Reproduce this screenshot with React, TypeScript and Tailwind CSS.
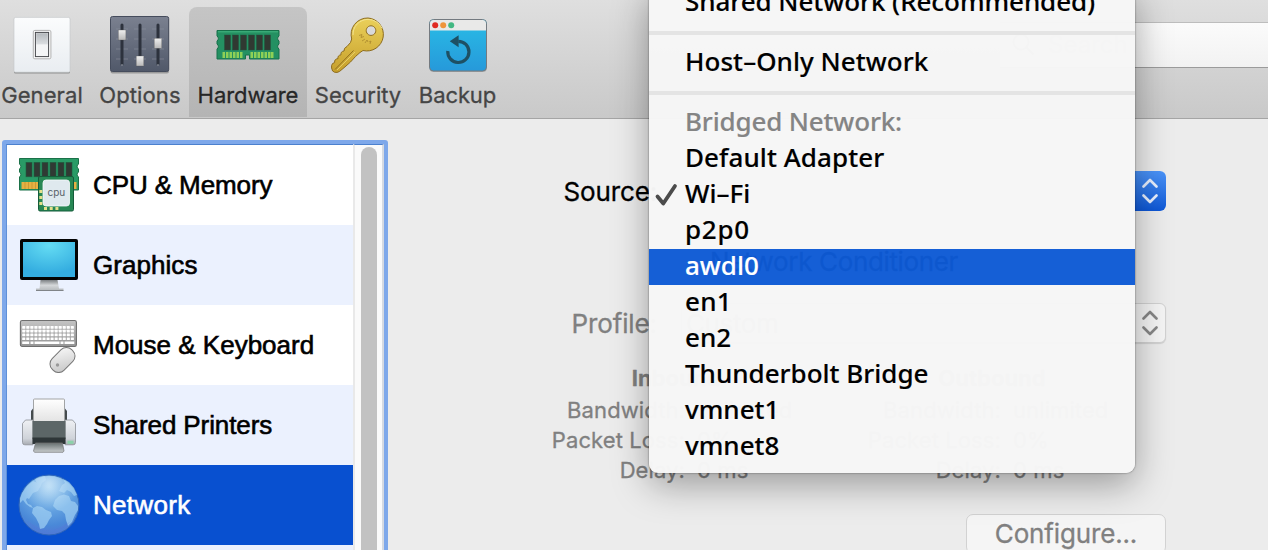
import React from "react";

function GeneralIcon() {
  return (
    <svg width="60" height="60" viewBox="0 0 60 60">
      <defs>
        <linearGradient id="ga" x1="0" y1="0" x2="0" y2="1"><stop offset="0" stopColor="#fbfcfd" /><stop offset="1" stopColor="#e9edf1" /></linearGradient>
        <linearGradient id="gb" x1="0" y1="0" x2="0" y2="1"><stop offset="0" stopColor="#b4b8bc" /><stop offset="1" stopColor="#dcdfe2" /></linearGradient>
      </defs>
      <rect x="2" y="3" width="56" height="55.4" rx="1.5" fill="#8f8f8f" />
      <rect x="2" y="2.4" width="56" height="54.8" rx="1.5" fill="url(#ga)" stroke="#c4c7ca" strokeWidth=".6" />
      <rect x="21.3" y="15.4" width="17.6" height="28.4" rx="1.5" fill="#fdfdfd" stroke="#a9a9a9" strokeWidth=".9" />
      <rect x="23.4" y="17.4" width="13.2" height="24.2" fill="#f4f5f6" stroke="#46484c" strokeWidth="1" />
      <rect x="24.2" y="18.2" width="11.6" height="11.2" fill="url(#gb)" />
    </svg>
  );
}

function OptionsIcon() {
  return (
    <svg width="64" height="64" viewBox="0 0 64 64">
      <defs>
        <linearGradient id="oa" x1="0" y1="0" x2="0" y2="1"><stop offset="0" stopColor="#7b8190" /><stop offset="1" stopColor="#505869" /></linearGradient>
        <linearGradient id="ob" x1="0" y1="0" x2="0" y2="1"><stop offset="0" stopColor="#efefef" /><stop offset="1" stopColor="#b9b9b9" /></linearGradient>
      </defs>
      <rect x="2.5" y="5" width="58.5" height="55.5" rx="2" fill="#00000044" />
      <rect x="2.5" y="3.5" width="58.2" height="55" rx="2" fill="url(#oa)" stroke="#454c5c" />
      {[16, 26, 36, 46].map((y) => (
        <path key={y} d={`M8 ${y}h12M26 ${y}h12M44 ${y}h12`} stroke="#8b909c" strokeWidth="1.2" opacity=".6" />
      ))}
      <path d="M14 12v39M32 12v39M50 12v39" stroke="#2d323d" strokeWidth="3" strokeLinecap="round" />
      <path d="M13 52h2M31 52h2M49 52h2" stroke="#9da2ad" strokeWidth="1" />
      <rect x="10.3" y="17" width="7.6" height="10" fill="url(#ob)" stroke="#555" strokeWidth=".3" />
      <rect x="28.2" y="43" width="7.6" height="10" fill="url(#ob)" stroke="#555" strokeWidth=".3" />
      <rect x="46.2" y="25.3" width="7.6" height="10" fill="url(#ob)" stroke="#555" strokeWidth=".3" />
    </svg>
  );
}

function HardwareIcon() {
  return (
    <svg width="64" height="32" viewBox="0 0 64 32">
      <path d="M1 1.5H63V7a3 3 0 0 0 0 5v3a3 3 0 0 0 0 5V30H33.5V26h-4V30H1V20a3 3 0 0 0 0-5V12a3 3 0 0 0 0-5Z" fill="#249062" stroke="#17704a" />
      <path d="M2 2.8H62" stroke="#43b581" strokeWidth="1" />
      {[8.5, 16.5, 24.5, 32.5, 40.5, 48.5].map((x) => (
        <rect key={x} x={x} y="6" width="6" height="15" fill="#303932" stroke="#22523c" strokeWidth=".5" />
      ))}
      {[6.5, 10, 13.5, 17, 20.5, 24, 34.5, 38, 41.5, 45, 48.5, 52, 55].map((x) => (
        <rect key={x} x={x} y="23" width="2.5" height="6" fill="#8ed056" />
      ))}
    </svg>
  );
}

function KeyIcon() {
  return (
    <svg width="56" height="58" viewBox="0 0 56 58">
      <defs>
        <linearGradient id="ka" x1="0" y1="0" x2="0" y2="1"><stop offset="0" stopColor="#ead05a" /><stop offset="1" stopColor="#c69f2b" /></linearGradient>
      </defs>
      <path fillRule="evenodd" d="M38 2A16.5 16.5 0 1 1 33 34.5L30 36.5 25.5 40.5 20.5 46 16 50 9.5 55.5Q7 57 4.5 56.2L2.6 55 1.6 52V49.5Q2 47 4.6 46.6Q4.2 43 8 42.6Q7.4 39.4 11 38.8Q10.4 35.5 14 35Q13.6 32 17 30.5L20.5 26.5 21.7 23A16.5 16.5 0 0 1 38 2ZM41 9.8a4.8 4.8 0 1 0 .01 0Z" fill="url(#ka)" stroke="#8d6c1f" strokeWidth="1" />
      <path d="M5 53.5 23.5 34.5" stroke="#8f6e1f" strokeWidth="1" />
      <path d="M7 54 25 36" stroke="#eedb80" strokeWidth=".7" />
      <path d="M23 19A15 15 0 0 1 38 3.4a15 15 0 0 1 14 9" stroke="#f3e38f" fill="none" />
      <path d="m29 19.5 3-1-1 3 3-1m-2 4.5 3-2m0 4 2-3 1 2m1 0 2-1-1 3" stroke="#a5832a" strokeWidth=".7" fill="none" />
    </svg>
  );
}

function BackupIcon() {
  return (
    <svg width="60" height="56" viewBox="0 0 60 56">
      <defs>
        <linearGradient id="ba" x1="0" y1="0" x2="0" y2="1"><stop offset="0" stopColor="#29bce6" /><stop offset="1" stopColor="#2699da" /></linearGradient>
      </defs>
      <rect x="1.5" y="3" width="57.3" height="52" rx="4" fill="#00000033" />
      <rect x="1.5" y="2.5" width="57" height="51.5" rx="4" fill="url(#ba)" stroke="#747a80" strokeWidth="1" />
      <path d="M2 13.5V6.5a3.5 3.5 0 0 1 3.5-3.5h49A3.5 3.5 0 0 1 58 6.5v7Z" fill="#e9e9e8" />
      <circle cx="7.2" cy="8.3" r="3" fill="#e02b22" />
      <circle cx="15.2" cy="8.3" r="3" fill="#ef943a" />
      <circle cx="23.2" cy="8.3" r="3" fill="#42b882" />
      <path d="M19.8 34A10.6 10.6 0 1 0 30.3 24.3" fill="none" stroke="#1e5064" strokeWidth="3.2" />
      <path d="M30.6 18.3V30.3L21.8 24.3Z" fill="#1e5064" />
    </svg>
  );
}

function CpuIcon() {
  return (
    <svg width="64" height="58" viewBox="-1 0 64 58">
      <path d="M1.5 2.5H60.5V8a3 3 0 0 0 0 5v3a3 3 0 0 0 0 5V34H1.5V21a3 3 0 0 0 0-5V13a3 3 0 0 0 0-5Z" fill="#299b66" stroke="#1b7148" />
      {[8, 16, 24, 32, 40, 48].map((x) => (
        <rect key={x} x={x} y="6.3" width="6" height="14.5" fill="#303a34" stroke="#1e5f40" strokeWidth=".6" />
      ))}
      <rect x="3.5" y="26" width="18" height="7" fill="#e6b143" />
      <rect x="55.5" y="26" width="3" height="7" fill="#e6b143" />
      {[7, 10.5, 14, 17.5].map((x) => <path key={x} d={`M${x} 26v7`} stroke="#c18f2c" strokeWidth=".7" />)}
      <rect x="20.5" y="20.5" width="35" height="34.5" rx="1.5" fill="#278754" stroke="#155c3a" />
      {[27, 32.7, 38.4].map((x) => <rect key={x} x={x - 1} y="51" width="3" height="3" fill="#e5e08b" />)}
      {[34, 40, 46].map((y) => <rect key={y} x="21.3" y={y} width="3" height="3" fill="#e5e08b" />)}
      <rect x="25" y="24" width="26.5" height="26" rx="3" fill="#dfe9ee" stroke="#f6fafb" strokeWidth=".8" />
      <text x="38.3" y="40" textAnchor="middle" fontSize="10" fontFamily="Inter, sans-serif" fill="#596168" className="[-webkit-text-stroke:0]">cpu</text>
    </svg>
  );
}

function DisplayIcon() {
  return (
    <svg width="60" height="54" viewBox="0 0 60 54">
      <defs>
        <radialGradient id="da" cx=".5" cy=".1" r=".8"><stop offset="0" stopColor="#64dcf3" /><stop offset="1" stopColor="#34ade0" /></radialGradient>
        <linearGradient id="db" x1="0" y1="0" x2="0" y2="1"><stop offset="0" stopColor="#7d8184" /><stop offset=".5" stopColor="#d5d8da" /><stop offset="1" stopColor="#b4b8bb" /></linearGradient>
      </defs>
      <path d="M21.5 42H38.5L40 50.5H44.5V52.5H17V50.5H20.5Z" fill="url(#db)" />
      <path d="M17 52.5H44.5" stroke="#808488" />
      <rect x="1" y="1" width="58" height="41" rx="2" fill="#030404" />
      <rect x="4" y="4" width="52" height="35" fill="url(#da)" />
    </svg>
  );
}

function KeyboardIcon() {
  return (
    <svg width="60" height="56" viewBox="0 0 60 56">
      <defs>
        <linearGradient id="ma" x1="0" y1="0" x2="1" y2="1"><stop offset="0" stopColor="#fafafa" /><stop offset="1" stopColor="#c4c4c4" /></linearGradient>
        <linearGradient id="mb" x1="0" y1="0" x2="0" y2="1"><stop offset="0" stopColor="#c4c4c4" /><stop offset="1" stopColor="#949494" /></linearGradient>
      </defs>
      <rect x="1.4" y="3.5" width="56" height="26" rx="1.8" fill="url(#mb)" stroke="#6f6f6f" strokeWidth="1.1" />
      {[9, 12.8, 16.6, 20.4].map((y, r) =>
        Array.from({ length: 13 }, (_, i) => (
          <rect key={`${r}-${i}`} x={3.2 + i * 4.05} y={y} width="3.1" height="2.7" rx=".4" fill="#fff" />
        ))
      )}
      <path d="M3.2 25.8h7M11.5 25.8h3M15.5 25.8h25M41.5 25.8h3M45.5 25.8h9.8" stroke="#fff" strokeWidth="2.6" />
      <rect x="-8.3" y="-13.8" width="16.6" height="27.6" rx="7.5" transform="translate(43.5 43) rotate(45)" fill="url(#ma)" stroke="#777" strokeWidth="1" />
      <circle cx="38.5" cy="48" r="1.7" fill="#999" />
    </svg>
  );
}

function PrinterIcon() {
  return (
    <svg width="56" height="56" viewBox="0 0 56 56">
      <defs>
        <linearGradient id="pa" x1="0" y1="0" x2="0" y2="1"><stop offset="0" stopColor="#eff1f4" /><stop offset=".75" stopColor="#cfd3d9" /><stop offset="1" stopColor="#a7abb1" /></linearGradient>
        <linearGradient id="pb" x1="0" y1="0" x2="0" y2="1"><stop offset="0" stopColor="#ffffff" /><stop offset="1" stopColor="#e3e3e3" /></linearGradient>
        <linearGradient id="pc" x1="0" y1="0" x2="0" y2="1"><stop offset="0" stopColor="#687171" /><stop offset="1" stopColor="#c9cdce" /></linearGradient>
      </defs>
      <path d="M10 26V14l2-2.5h32l2 2.5v12Z" fill="#454b4d" />
      <rect x="12.5" y="2" width="31" height="23" rx="1" fill="url(#pb)" stroke="#a2a4a5" />
      <path d="M12 23H4.5L1.5 26.5V45.5a2.3 2.3 0 0 0 2.3 2.3H12ZM44 23h7.5l3 3.5V45.5a2.3 2.3 0 0 1-2.3 2.3H44Z" fill="url(#pa)" stroke="#8b8f95" strokeWidth=".8" />
      <path d="M11.5 24h33V42h-33Z" fill="#5c6667" />
      <path d="M11.5 40.5h33V47h-33Z" fill="#2e3638" />
      <path d="M14.5 46h27l1.5 8-1 1.3H13.5l-1-1.3Z" fill="url(#pc)" stroke="#777" strokeWidth=".7" />
      <rect x="46.5" y="43.7" width="6" height="3.2" fill="#8cd1aa" />
    </svg>
  );
}

function GlobeIcon() {
  return (
    <svg width="62" height="62" viewBox="0 0 62 62">
      <defs>
        <radialGradient id="na" cx=".5" cy=".2" r=".85"><stop offset="0" stopColor="#a0d0f2" /><stop offset=".35" stopColor="#6dabe4" /><stop offset=".75" stopColor="#4a89d8" /><stop offset="1" stopColor="#5272d4" /></radialGradient>
        <radialGradient id="nb" cx=".5" cy=".12" r=".5"><stop offset="0" stopColor="#fff" stopOpacity=".4" /><stop offset="1" stopColor="#fff" stopOpacity="0" /></radialGradient>
      </defs>
      <circle cx="31" cy="31" r="30" fill="url(#na)" stroke="#2f65b8" strokeWidth="1" />
      <g fill="#9fcff3" opacity=".72">
        <path d="M4 19 9 12 15 7 20 9 22 13 20 17 15 19 13 22 11 25 9 24 8 26 10 30 13 31 15 34 12 33 8 30 5 26 2 29 2 24Z" />
        <path d="M15 34 19 32 24 33 28 36 33 38 34 42 31 46 29 50 26 54 22 55 21 50 18 44 14 39Z" />
        <path d="M17 5 22 2.5 27 2 28 6 24 9 22 14 19 10Z" />
        <path d="M37 26 41 22 46 20.5 51 22 53 27 57 28 60 32 60 36 57 41 54 48 50 52 48 46 47 40 44 37 39 36 35 32Z" />
        <path d="M41 17 44 11 47 9 45 5 51 8 56 14 59 21 56 22 53 18 49 16 46 19Z" />
      </g>
      <path d="M9 47Q31 66 53 47A29.5 29.5 0 0 1 9 47Z" fill="#5e76d8" opacity=".6" />
      <circle cx="31" cy="31" r="29" fill="url(#nb)" />
    </svg>
  );
}

const tools = [
  { name: "General", icon: <GeneralIcon />, box: "w-[84px]", text: "tracking-[0.1px]" },
  { name: "Options", icon: <OptionsIcon />, box: "ml-[7px] w-[98px]", text: "tracking-[0.1px]" },
  { name: "Hardware", icon: <HardwareIcon />, box: "mb-px w-[118px] rounded-t-[8px] bg-linear-to-b from-[#c5c5c5] to-[#b4b4b4] text-[#262626]", text: "tracking-[-0.05px]" },
  { name: "Security", icon: <KeyIcon />, box: "w-[102px]", text: "tracking-[0px]" },
  { name: "Backup", icon: <BackupIcon />, box: "w-[97px]", text: "tracking-[-0.1px]" },
];

const devices = [
  { name: "CPU & Memory", icon: <CpuIcon />, bg: "bg-white", text: "tracking-[-0.1px]" },
  { name: "Graphics", icon: <DisplayIcon />, bg: "bg-[#ebf1fe]", text: "tracking-[0.05px]" },
  { name: "Mouse & Keyboard", icon: <KeyboardIcon />, bg: "bg-white", text: "tracking-[0px]" },
  { name: "Shared Printers", icon: <PrinterIcon />, bg: "bg-[#ebf1fe]", text: "tracking-[-0.1px]" },
  { name: "Network", icon: <GlobeIcon />, bg: "bg-[#0850d0] text-white [-webkit-text-stroke:0.6px_white]", text: "tracking-[0.3px]" },
  { name: "", icon: null, bg: "bg-[#ebf1fe]", text: "" },
];

function Chevrons({ color }: { color: string }) {
  return (
    <svg width="16" height="26" viewBox="0 0 16 26" fill="none" stroke={color} strokeWidth="2.6" strokeLinecap="round" strokeLinejoin="round">
      <path d="M1.5 8.5 8 2 14.5 8.5M1.5 17.5 8 24 14.5 17.5" />
    </svg>
  );
}

function Stats({ title }: { title: string }) {
  return (
    <div className="w-[316px] text-[22px] text-[#808080]">
      <div className="h-[35px] w-[250px] text-center text-[22px] leading-[37px] font-bold">{title}</div>
      {[["Bandwidth:", "unlimited"], ["Packet Loss:", "0%"], ["Delay:", "0 ms"]].map(([k, v]) => (
        <div key={k} className="flex h-[30px] gap-3 leading-[30px] tracking-[0.1px]">
          <span className="w-[134px] text-right whitespace-nowrap">{k}</span>
          <span>{v}</span>
        </div>
      ))}
    </div>
  );
}

const rowBg = "bg-[#f6f6f6]/98";

function MenuItem({ label, checked, state = "normal", tracking = "" }: { label: string; checked?: boolean; state?: "normal" | "active" | "header"; tracking?: string }) {
  const tone = state === "active" ? "bg-[#0d5ad5]/97 text-white" : state === "header" ? `${rowBg} text-[#848484]` : `${rowBg} text-black`;
  return (
    <div className={`flex h-9 items-center ${tone}`}>
      <span className="flex w-9 justify-center pr-[2px]">
        {checked && (
          <svg width="24" height="24" viewBox="0 0 24 24" fill="none" stroke="#4b4b4b" strokeWidth="3.8" strokeLinecap="round" strokeLinejoin="round">
            <path d="M3.5 13.5 9.3 20.5 21 3" />
          </svg>
        )}
      </span>
      <span className={`h-9 pb-1 leading-8 whitespace-nowrap ${tracking}`}>{label}</span>
    </div>
  );
}

function Separator() {
  return (
    <div className={`flex h-6 items-center ${rowBg}`}>
      <div className="h-1 w-full bg-[#e4e4e4]" />
    </div>
  );
}

export default function App() {
  return (
    <div className="relative flex h-[550px] w-[1268px] flex-col overflow-hidden bg-[#ececec] font-[Inter,sans-serif] [-webkit-text-stroke:0.3px_currentColor]">
      <header className="flex h-[119px] shrink-0 border-b border-[#a5a5a5] bg-linear-to-b from-[#dfdfdf] to-[#c9c9c9] pt-[7px] text-[#454545]">
        {tools.map((t) => (
          <div key={t.name} className={`flex shrink-0 flex-col items-center ${t.box}`}>
            <div className="flex h-[75px] items-center justify-center">{t.icon}</div>
            <span className={`text-[22px] leading-[27px] ${t.text}`}>{t.name}</span>
          </div>
        ))}
        <div className="mt-[15px] ml-auto flex h-[46px] w-[268px] items-center gap-3 border-y border-t-[#bdbdbd] border-b-[#9b9b9b] bg-linear-to-b from-[#fbfbfb] to-[#f2f2f2] pl-3 text-[24px] text-[#b0b0b0]">
          <svg width="24" height="24" viewBox="0 0 24 24" fill="none" stroke="#999999" strokeWidth="2"><circle cx="9" cy="9" r="7.5" /><path d="m14.5 14.5 7 7" /></svg>
          <span>Search</span>
        </div>
      </header>

      <main className="flex min-h-0 flex-1">
        <aside className="mt-[21px] ml-[2px] flex h-[440px] w-[386px] shrink-0 rounded-[3px] border-4 border-[#7ea8ea] bg-white">
          <div className="w-[347px] shrink-0 border-t border-l border-t-[#4b80ce] border-l-[#5f90d8] font-['Liberation_Sans',Arial,sans-serif] text-[26px] [-webkit-text-stroke:0.6px_black]">
            {devices.map((d, i) => (
              <div key={i} className={`flex h-20 items-center ${d.bg}`}>
                <span className="flex w-[84px] justify-center">{d.icon}</span>
                <span className={`ml-[2px] whitespace-nowrap ${d.text}`}>{d.name}</span>
              </div>
            ))}
          </div>
          <div className="flex flex-1 justify-center border-t border-r-2 border-l-2 border-t-[#4b80ce] border-r-[#d5dae2] border-l-[#e9e9e9] bg-[#fafafa] pt-[2px]">
            <div className="h-[420px] w-4 rounded-full bg-[#c2c2c2]" />
          </div>
        </aside>

        <section className="flex flex-1 flex-col pt-[52px] text-[26px] text-[#808080]">
          <div className="flex h-10 items-center">
            <span className="h-10 w-[269px] text-right leading-[42px] tracking-[-0.15px] text-black">Source:</span>
            <div className="ml-6 flex h-10 w-[485px] justify-end overflow-hidden rounded-[6px] bg-white">
              <div className="flex w-8 items-center justify-center bg-linear-to-b from-[#4a93f8] to-[#0d57d6]"><Chevrons color="#e9f1ff" /></div>
            </div>
          </div>
          <div className="mt-[31px] ml-[322px] h-10 w-[300px] text-[26px] leading-10 tracking-[-0.35px] text-black">Network Conditioner</div>
          <div className="mt-[21px] flex h-10 items-center">
            <span className="h-10 w-[269px] text-right leading-[42px] tracking-[-0.1px]">Profile:</span>
            <div className="ml-6 flex h-10 w-[485px] items-center justify-between rounded-[6px] border border-[#d2d2d2] bg-[#f5f5f5] pr-[7px] pl-1 shadow-[0_1px_1px_rgba(0,0,0,0.12)]">
              <span className="tracking-[-0.4px]">Custom</span>
              <Chevrons color="#878787" />
            </div>
          </div>
          <div className="mt-[17px] ml-[163px] flex"><Stats title="Inbound" /><Stats title="Outbound" /></div>
          <button className="mt-[29px] ml-[578px] h-10 w-[200px] shrink-0 rounded-[7px] border border-[#d2d2d2] bg-[#f5f5f5] text-center leading-[38px] tracking-[-0.15px]">Configure...</button>
        </section>
      </main>

      <div className="absolute -top-[15px] left-[649px] w-[486px] overflow-hidden rounded-b-[9px] font-['Noto_Sans',sans-serif] text-[26px] font-medium shadow-[0_0_2px_rgba(0,0,0,0.55),0_12px_36px_rgba(0,0,0,0.34)] [-webkit-text-stroke:0.15px_currentColor]">
        <MenuItem label="Shared Network (Recommended)" tracking="tracking-[-0.06px]" />
        <Separator />
        <MenuItem label="Host–Only Network" tracking="tracking-[0.05px]" />
        <Separator />
        <MenuItem label="Bridged Network:" state="header" tracking="tracking-[-0.16px]" />
        <MenuItem label="Default Adapter" tracking="tracking-[0.08px]" />
        <MenuItem label="Wi–Fi" checked />
        <MenuItem label="p2p0" tracking="tracking-[0.7px]" />
        <MenuItem label="awdl0" state="active" />
        <MenuItem label="en1" tracking="tracking-[0.3px]" />
        <MenuItem label="en2" />
        <MenuItem label="Thunderbolt Bridge" />
        <MenuItem label="vmnet1" />
        <MenuItem label="vmnet8" />
        <div className={`h-2 ${rowBg}`} />
      </div>
    </div>
  );
}
